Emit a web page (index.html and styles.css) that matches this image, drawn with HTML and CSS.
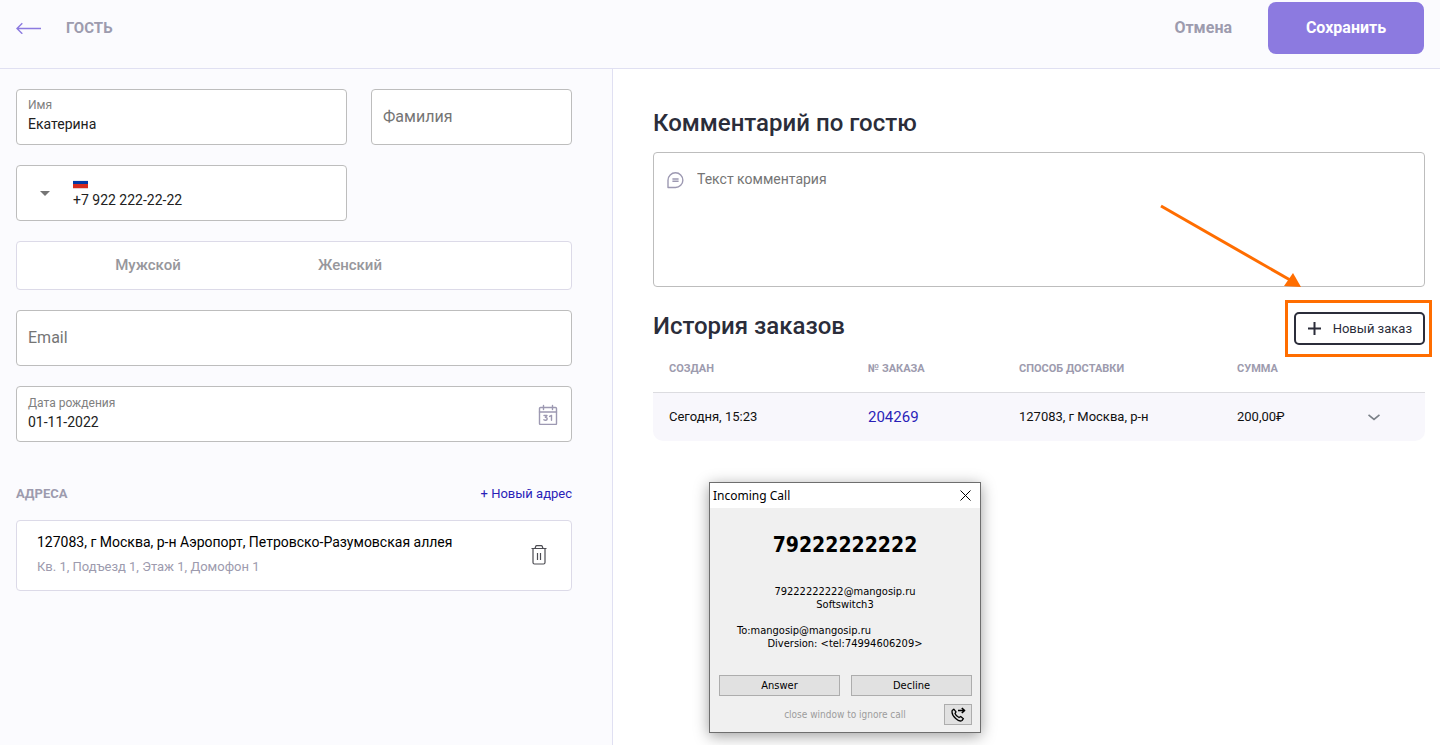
FILE: index.html
```html
<!DOCTYPE html>
<html lang="ru">
<head>
<meta charset="utf-8">
<meta name="viewport" content="width=device-width, initial-scale=1">
<title>Гость</title>
<link rel="stylesheet" href="styles.css">
</head>
<body>
<header class="topbar">
  <button class="back" type="button" aria-label="Назад">
    <svg width="26" height="12" viewBox="0 0 26 12" fill="none" stroke="currentColor" stroke-width="1.4"><path d="M25 6.500H1.2M6.3 1.200 1 6.500l5.3 5.3"/></svg>
  </button>
  <h1 class="topbar-title">ГОСТЬ</h1>
  <button class="cancel" type="button">Отмена</button>
  <button class="save" type="button">Сохранить</button>
</header>

<main class="layout">
  <form class="guest">
    <div class="name-row">
      <div class="field">
        <label class="field-label" for="first-name">Имя</label>
        <input class="field-input" id="first-name" type="text" value="Екатерина">
      </div>
      <div class="field">
        <input class="field-input field-empty" type="text" placeholder="Фамилия" aria-label="Фамилия">
      </div>
      <div class="field phone">
        <button class="country" type="button" aria-label="Код страны"><svg width="10" height="5" viewBox="0 0 10 5"><path d="M0 0h10L5 5z" fill="#757575"/></svg></button>
        <div class="phone-body">
          <svg class="flag" width="15" height="9" viewBox="0 0 15 9"><path fill="#eee" d="M0 0h15v3H0z"/><path fill="#0039a6" d="M0 1h15v4H0z"/><path fill="#d52b1e" d="M0 4h15v4H0z"/><path fill="#e8cfd0" d="M0 8h15v1H0z"/></svg>
          <input class="field-input" type="tel" value="+7 922 222-22-22" aria-label="Телефон">
        </div>
      </div>
    </div>

    <div class="gender" role="radiogroup" aria-label="Пол">
      <label class="gender-option"><input class="gender-radio" type="radio" name="gender">Мужской</label>
      <label class="gender-option"><input class="gender-radio" type="radio" name="gender">Женский</label>
    </div>

    <div class="field">
      <input class="field-input field-empty" type="email" placeholder="Email" aria-label="Email">
    </div>

    <div class="field date">
      <div class="date-body">
        <label class="field-label" for="birthday">Дата рождения</label>
        <input class="field-input" id="birthday" type="text" value="01-11-2022">
      </div>
      <button class="icon-button" type="button" aria-label="Открыть календарь">
        <svg width="20" height="21" viewBox="0 0 20 21" fill="none" stroke="#9d99b2" stroke-width="1.4" stroke-linecap="round" stroke-linejoin="round"><rect x="1.5" y="3.500" width="17" height="17" rx="1"/><path d="M1.5 8h17M5.5 1.500v4M14.5 1.500v4"/><path d="M6 11.500h3l-1.6 1.900c1 0 1.8.6 1.8 1.4 0 1.600-2.300 1.900-3.300.9M11.600 12.400l1.900-1V16.300"/></svg>
      </button>
    </div>

    <section class="addresses">
      <div class="addresses-head">
        <h2 class="addresses-title">АДРЕСА</h2>
        <a class="link add-address" href="#">+ Новый адрес</a>
      </div>
      <div class="address">
        <div>
          <p class="address-main">127083, г Москва, р-н Аэропорт, Петровско-Разумовская аллея</p>
          <p class="address-extra">Кв. 1, Подъезд 1, Этаж 1, Домофон 1</p>
        </div>
        <button class="icon-button" type="button" aria-label="Удалить адрес">
          <svg width="18" height="20" viewBox="0 0 18 20" fill="none" stroke="#4c4c52" stroke-width="1.2"><path d="M1.500 3.500h15M5 3.500l.8-2.300q.2-.6.800-.6h4.800q.6 0 .8.6l.8 2.300M3 3.500v14q0 1.500 1.500 1.500h9q1.500 0 1.500-1.500v-14M7.500 8v7M10.500 8v7"/></svg>
        </button>
      </div>
    </section>
  </form>

  <section class="details">
    <h2 class="heading"><label for="comment">Комментарий по гостю</label></h2>
    <div class="comment">
      <svg class="comment-icon" width="17" height="17" viewBox="0 0 17 17" fill="none" stroke="#9d99b2" stroke-width="1.400" stroke-linejoin="round"><path d="M8.500.8a7.300 7.300 0 0 1 0 14.700H1V8.200A7.500 7.400 0 0 1 8.500.8z"/><path d="M5.400 7h6.200M5.400 9.300h6.200"/></svg>
      <textarea class="comment-input" id="comment" placeholder="Текст комментария"></textarea>
    </div>

    <div class="history-head">
      <h2 class="heading">История заказов</h2>
      <div class="new-order-wrap">
        <button class="new-order" type="button">
          <svg width="13" height="13" viewBox="0 0 13 13" stroke="currentColor" stroke-width="2"><path d="M6.500 0v13M0 6.500h13"/></svg>
          Новый заказ
        </button>
        <span class="highlight"></span>
        <svg class="pointer" width="144" height="88" viewBox="0 0 144 88"><path d="M3 3 133 77.500" stroke="#ff6d00" stroke-width="3"/><path d="M135 70 143 84 126 83z" fill="#ff6d00"/></svg>
      </div>
    </div>

    <table class="orders">
      <thead>
        <tr>
          <th class="col-created">СОЗДАН</th>
          <th class="col-number">№ ЗАКАЗА</th>
          <th class="col-delivery">СПОСОБ ДОСТАВКИ</th>
          <th class="col-sum">СУММА</th>
          <th class="col-toggle"></th>
        </tr>
      </thead>
      <tbody>
        <tr>
          <td>Сегодня, 15:23</td>
          <td><a class="link order-link" href="#">204269</a></td>
          <td>127083, г Москва, р-н</td>
          <td>200,00₽</td>
          <td class="toggle-cell"><button class="icon-button" type="button" aria-label="Развернуть"><svg width="12" height="7" viewBox="0 0 12 7" fill="none" stroke="#7b8188" stroke-width="1.700"><path d="M.5.8 6 5.300 11.500.8"/></svg></button></td>
        </tr>
      </tbody>
    </table>
  </section>
</main>

<div class="call" role="dialog" aria-labelledby="call-title">
  <div class="call-bar">
    <span id="call-title">Incoming Call</span>
    <button class="call-close" type="button" aria-label="Close"><svg width="11" height="11" viewBox="0 0 11 11" stroke="#000"><path d="m.5.5 10 10M10.500.5l-10 10"/></svg></button>
  </div>
  <p class="call-number">79222222222</p>
  <p class="call-line">79222222222@mangosip.ru</p>
  <p class="call-line">Softswitch3</p>
  <p class="call-line call-to">To:mangosip@mangosip.ru</p>
  <p class="call-line">Diversion: &lt;tel:74994606209&gt;</p>
  <div class="call-actions">
    <button class="win-button" type="button">Answer</button>
    <button class="win-button" type="button">Decline</button>
  </div>
  <div class="call-foot">
    <span class="call-hint">close window to ignore call</span>
    <button class="win-button" type="button" aria-label="Forward call"><svg width="15" height="15" viewBox="0 0 15 15" fill="none" stroke="#000" stroke-width="1.300" stroke-linejoin="round"><path d="M1.200 3.500 2.800 2.200l2.200 2.600-1 1.700c.7 1.700 2.100 3.200 4 4l1.700-1 2.700 2.200-1.400 1.800c-1.500 1-4.100.1-6.300-1.900C2.500 9.600.5 6.300 1.200 3.500z"/><path d="M7 3.500h6.500M10.800 1l2.800 2.500L10.800 6" stroke-width="1.600"/></svg></button>
  </div>
</div>
</body>
</html>
```
FILE: styles.css
```css
* { box-sizing: border-box; }

body {
  margin: 0;
  min-height: 100vh;
  display: flex;
  flex-direction: column;
  font-family: Roboto, "Liberation Sans", sans-serif;
  font-size: 14px;
  line-height: 20px;
  color: #212121;
  background: #fff;
}

h1, h2, p { margin: 0; }

button, input, textarea { font: inherit; color: inherit; }

button {
  padding: 0;
  border: 0;
  background: none;
  cursor: pointer;
}

svg { display: block; }

.link {
  color: #2a1fb8;
  text-decoration: none;
}

/* Top bar */
.topbar {
  display: flex;
  align-items: center;
  padding: 2px 16px 14px;
  background: #fbfbfe;
  border-bottom: 1px solid #e0e0f2;
}

.back { color: #8c7ae0; }

.topbar-title {
  margin-left: 24px;
  font-size: 15px;
  font-weight: 700;
  color: #9d9bae;
}

.cancel {
  margin-left: auto;
  font-size: 16px;
  font-weight: 700;
  color: #9d9bae;
}

.save {
  width: 156px;
  height: 52px;
  margin-left: 36px;
  border-radius: 8px;
  font-size: 16px;
  font-weight: 700;
  color: #fff;
  background: #8c7ae0;
}

/* Two columns */
.layout {
  flex: 1;
  display: grid;
  grid-template-columns: 613fr 827fr;
}

.guest {
  display: flex;
  flex-direction: column;
  gap: 20px;
  padding: 20px 40px 20px 16px;
  background: #fbfbfe;
  border-right: 1px solid #e0e0f2;
}

.name-row {
  display: grid;
  grid-template-columns: 28fr 17fr;
  gap: 20px 24px;
}

.field {
  height: 56px;
  padding: 8px 11px;
  border: 1px solid #bdbdbd;
  border-radius: 4px;
  background: #fff;
}

.field-label {
  display: block;
  margin-bottom: 1px;
  font-size: 12px;
  line-height: 15px;
  color: #808080;
}

.field-input {
  display: block;
  width: 100%;
  height: 20px;
  padding: 0;
  border: 0;
  outline: 0;
  background: none;
}

.field-empty {
  height: 36px;
  font-size: 16px;
}

.field-input::placeholder { color: #757575; }

.phone { display: flex; }

.country {
  width: 33px;
  display: grid;
  place-items: center;
}

.phone-body {
  flex: 1;
  padding: 6px 0 0 12px;
}

.flag { margin-bottom: 1px; }

.gender {
  display: grid;
  grid-template-columns: 1fr 1fr;
  height: 49px;
  padding: 0 120px 2px 30px;
  border: 1px solid #dcdae8;
  border-radius: 4px;
  background: #fff;
}

.gender-option {
  display: flex;
  align-items: center;
  justify-content: center;
  font-size: 15px;
  font-weight: 500;
  color: #97979c;
}

.gender-radio {
  appearance: none;
  width: 0;
  margin: 0;
}

.date {
  display: flex;
  align-items: center;
  padding-right: 13px;
}

.date-body { flex: 1; }

.addresses { margin-top: 22px; }

.addresses-head {
  display: flex;
  align-items: center;
  justify-content: space-between;
  margin-bottom: 16px;
  font-size: 13px;
}

.addresses-title {
  font-size: 13px;
  font-weight: 700;
  color: #9d9bae;
}

.address {
  display: flex;
  align-items: center;
  justify-content: space-between;
  padding: 11px 23px 13px 20px;
  border: 1px solid #dcdae8;
  border-radius: 4px;
  background: #fff;
}

.address-main { color: #000; }

.address-extra {
  margin-top: 5px;
  font-size: 13px;
  color: #9d9bae;
}

/* Comment and order history */
.details { padding: 38px 15px 20px 40px; }

.heading {
  font-size: 24px;
  font-weight: 500;
  line-height: 32px;
  color: #2b2d3a;
}

.comment {
  display: flex;
  margin-top: 13px;
  height: 135px;
  padding: 16px 12px 12px 13px;
  border: 1px solid #bdbdbd;
  border-radius: 4px;
}

.comment-icon { margin-top: 3px; }

.comment-input {
  flex: 1;
  margin-left: 13px;
  padding: 0;
  border: 0;
  outline: 0;
  resize: none;
  background: none;
}

.comment-input::placeholder { color: #757575; }

.history-head {
  display: flex;
  align-items: flex-start;
  justify-content: space-between;
  padding-top: 23px;
}

.new-order-wrap {
  position: relative;
  margin-top: 2px;
}

.new-order {
  display: flex;
  align-items: center;
  justify-content: space-between;
  width: 131px;
  height: 33px;
  padding: 0 11px 0 12px;
  border: 2px solid #2b2d3a;
  border-radius: 5px;
  font-size: 13px;
  color: #2b2d3a;
}

.highlight {
  position: absolute;
  inset: -12px -7px -12px -9px;
  border: 3px solid #ff6d00;
  pointer-events: none;
}

.pointer {
  position: absolute;
  top: -109px;
  right: 123px;
  pointer-events: none;
}

.orders {
  width: 100%;
  table-layout: fixed;
  border-collapse: separate;
  border-spacing: 0;
  font-size: 13px;
  color: #111;
}

.orders th {
  height: 48px;
  padding: 0 0 0 16px;
  border-bottom: 1px solid #dcdce0;
  font-size: 11px;
  font-weight: 700;
  text-align: left;
  color: #9d9bae;
}

.orders td {
  height: 48px;
  padding: 0 0 0 16px;
  background: #f8f7fc;
}

.orders td:first-child { border-bottom-left-radius: 10px; }
.orders td:last-child { border-bottom-right-radius: 10px; }

.col-created { width: 199px; }
.col-number { width: 151px; }
.col-delivery { width: 218px; }

.order-link { font-size: 15px; }

.orders .toggle-cell { padding: 0; }

.toggle-cell .icon-button {
  display: block;
  margin: 0 auto;
}

/* Floating call window */
.call {
  position: absolute;
  left: 709px;
  top: 482px;
  width: 272px;
  border: 1px solid #6e6e6e;
  background: #f0f0f0;
  box-shadow: 0 3px 14px rgba(0, 0, 0, .38);
  font-family: "DejaVu Sans Condensed", "DejaVu Sans", sans-serif;
  font-size: 11px;
  line-height: 13px;
  text-align: center;
  color: #000;
}

.call-bar {
  display: flex;
  align-items: center;
  justify-content: space-between;
  height: 25px;
  padding: 0 9px 1px 3px;
  background: #fff;
  font-family: "Noto Sans", sans-serif;
  font-size: 12px;
}

.call-number {
  padding: 25px 0 28px;
  font-size: 21px;
  font-weight: 700;
  line-height: 24px;
}

.call-to {
  margin-top: 13px;
  padding-right: 82px;
}

.call-actions {
  display: grid;
  grid-template-columns: 1fr 1fr;
  gap: 11px;
  padding: 25px 8px 8px 9px;
}

.win-button {
  height: 21px;
  border: 1px solid #adadad;
  background: #e1e1e1;
}

.call-foot {
  display: grid;
  grid-template-columns: 28px 1fr 28px;
  align-items: center;
  padding: 0 8px 7px;
}

.call-hint {
  grid-column: 2;
  font-size: 10px;
  color: #9c9c9c;
}

.call-foot .win-button {
  display: grid;
  place-items: center;
}
```
